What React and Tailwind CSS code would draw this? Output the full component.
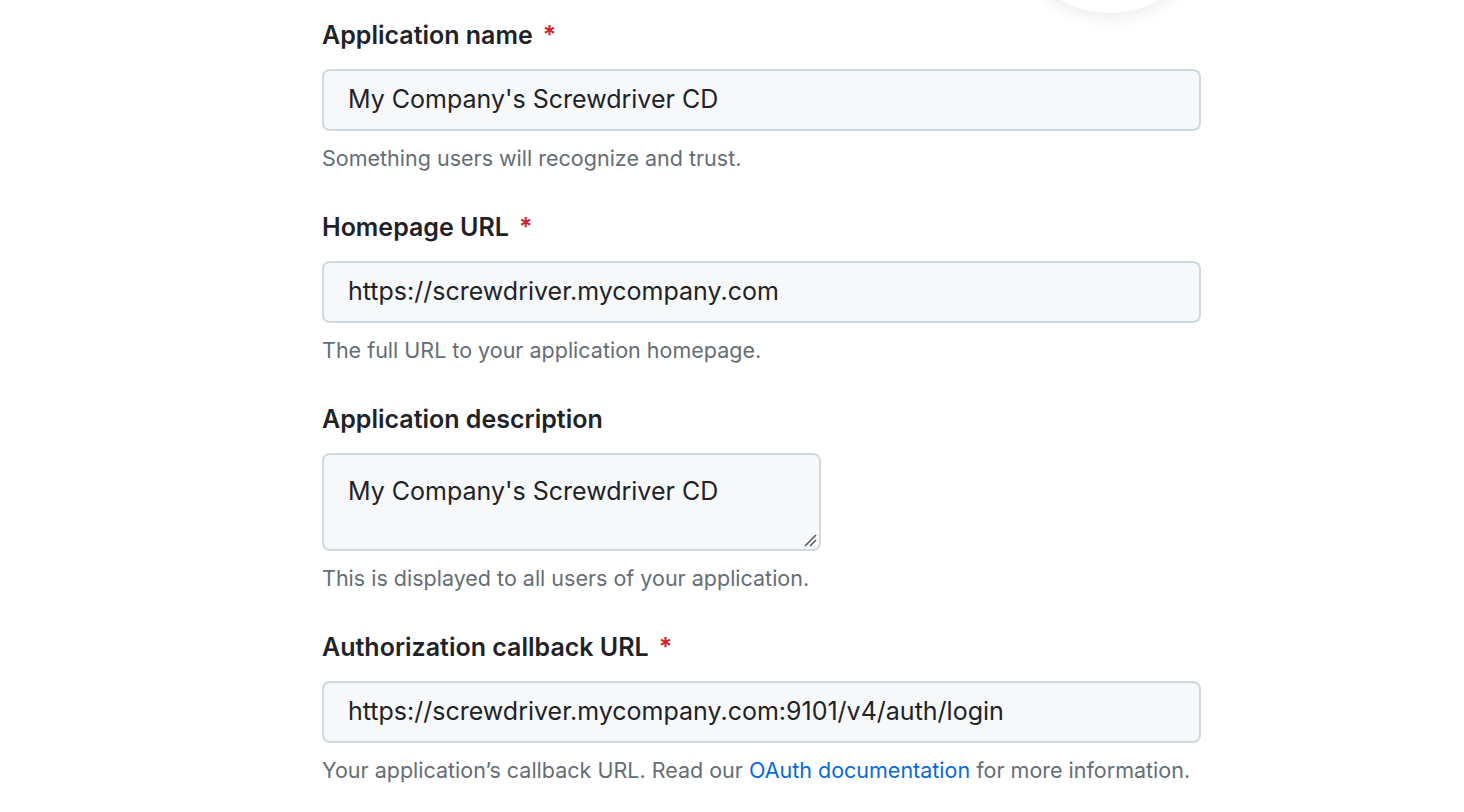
export default function App() {
  const font = { fontFamily: 'Inter, "Liberation Sans", Arial, sans-serif' };
  const Label = ({ children, req }) => (
    <div className="h-[36px] leading-[36px] text-[25px] font-semibold text-[#1f2328]">
      {children}
      {req && <span className="text-[#cf222e] ml-[10px]">*</span>}
    </div>
  );
  const Input = ({ value }) => (
    <div className="mt-4 w-[879px] h-[62px] rounded-[8px] border-2 border-[#d0d7de] bg-[#f6f8fa] px-[24px] flex items-center text-[25px] text-[#1f2328]">
      {value}
    </div>
  );
  const Help = ({ children }) => (
    <div className="mt-[12px] h-[30px] leading-[30px] text-[21.5px] text-[#656d76]">{children}</div>
  );
  return (
    <div style={font} className="relative w-[1464px] h-[812px] bg-white overflow-hidden">
      <div className="absolute left-[1010px] top-[-190px] w-[200px] h-[203px] rounded-full bg-white shadow-[0_4px_16px_rgba(0,0,0,0.08)]" />
      <div className="pl-[322px] pt-[17px] flex flex-col gap-[36px]">
        <div>
          <Label req>Application name</Label>
          <Input value="My Company's Screwdriver CD" />
          <Help>Something users will recognize and trust.</Help>
        </div>
        <div>
          <Label req>Homepage URL</Label>
          <Input value="https://screwdriver.mycompany.com" />
          <Help>The full URL to your application homepage.</Help>
        </div>
        <div>
          <Label>Application description</Label>
          <div className="relative mt-4 w-[499px] h-[98px] rounded-[8px] border-2 border-[#d0d7de] bg-[#f6f8fa] px-[24px] pt-[18px] text-[25px] text-[#1f2328] leading-[36px]">
            My Company's Screwdriver CD
            <svg className="absolute right-[2px] bottom-[2px]" width="16" height="16" viewBox="0 0 16 16">
              <path d="M15 4 L4 15 M15 9 L9 15" stroke="#555" strokeWidth="1.5" />
            </svg>
          </div>
          <Help>This is displayed to all users of your application.</Help>
        </div>
        <div>
          <Label req>Authorization callback URL</Label>
          <Input value="https://screwdriver.mycompany.com:9101/v4/auth/login" />
          <Help>
            Your application’s callback URL. Read our <span className="text-[#0969da]">OAuth documentation</span> for more information.
          </Help>
        </div>
      </div>
    </div>
  );
}
